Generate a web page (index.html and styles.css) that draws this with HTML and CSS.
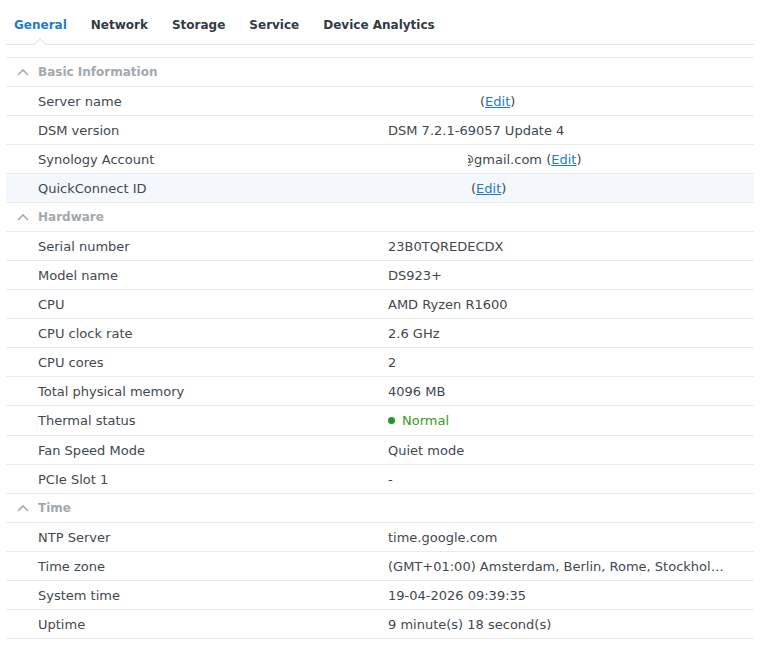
FILE: index.html
```html
<!DOCTYPE html>
<html>
<head>
<meta charset="utf-8">
<link rel="stylesheet" href="styles.css">
</head>
<body>
<div class="page">
  <nav class="tabs">
    <span class="tab active">General</span>
    <span class="tab">Network</span>
    <span class="tab">Storage</span>
    <span class="tab">Service</span>
    <span class="tab">Device Analytics</span>
  </nav>

  <div class="sections">
    <section class="group">
      <div class="group-head"><svg class="chev" width="12" height="8" viewBox="0 0 12 8"><path d="M1 7 L6 2 L11 7" fill="none" stroke="#a7adb2" stroke-width="1.6"/></svg>Basic Information</div>
      <div class="row"><div class="label">Server name</div><div class="value"><span class="pad-server"></span>(<a class="edit">Edit</a>)</div></div>
      <div class="row"><div class="label">DSM version</div><div class="value">DSM 7.2.1-69057 Update 4</div></div>
      <div class="row"><div class="label">Synology Account</div><div class="value"><span class="pad-account"></span><span class="clip">@</span>gmail.com (<a class="edit">Edit</a>)</div></div>
      <div class="row hover"><div class="label">QuickConnect ID</div><div class="value"><span class="pad-qc"></span>(<a class="edit">Edit</a>)</div></div>
    </section>

    <section class="group">
      <div class="group-head"><svg class="chev" width="12" height="8" viewBox="0 0 12 8"><path d="M1 7 L6 2 L11 7" fill="none" stroke="#a7adb2" stroke-width="1.6"/></svg>Hardware</div>
      <div class="row"><div class="label">Serial number</div><div class="value">23B0TQREDECDX</div></div>
      <div class="row"><div class="label">Model name</div><div class="value">DS923+</div></div>
      <div class="row"><div class="label">CPU</div><div class="value">AMD Ryzen R1600</div></div>
      <div class="row"><div class="label">CPU clock rate</div><div class="value">2.6 GHz</div></div>
      <div class="row"><div class="label">CPU cores</div><div class="value">2</div></div>
      <div class="row"><div class="label">Total physical memory</div><div class="value">4096 MB</div></div>
      <div class="row tall"><div class="label">Thermal status</div><div class="value status"><span class="dot"></span>Normal</div></div>
      <div class="row"><div class="label">Fan Speed Mode</div><div class="value">Quiet mode</div></div>
      <div class="row"><div class="label">PCIe Slot 1</div><div class="value">-</div></div>
    </section>

    <section class="group">
      <div class="group-head"><svg class="chev" width="12" height="8" viewBox="0 0 12 8"><path d="M1 7 L6 2 L11 7" fill="none" stroke="#a7adb2" stroke-width="1.6"/></svg>Time</div>
      <div class="row"><div class="label">NTP Server</div><div class="value">time.google.com</div></div>
      <div class="row"><div class="label">Time zone</div><div class="value">(GMT+01:00) Amsterdam, Berlin, Rome, Stockholm, Vienna</div></div>
      <div class="row"><div class="label">System time</div><div class="value">19-04-2026 09:39:35</div></div>
      <div class="row"><div class="label">Uptime</div><div class="value">9 minute(s) 18 second(s)</div></div>
    </section>
  </div>
</div>
</body>
</html>
```

FILE: styles.css
```css
* { box-sizing: border-box; }
html, body { margin: 0; padding: 0; background: #fff; }
body {
  font-family: "DejaVu Sans", Verdana, sans-serif;
  font-size: 13px;
  color: #3f4850;
}
.page {
  padding: 0 8px 0 6px;
}
.tabs {
  position: relative;
  display: flex;
  gap: 24px;
  height: 45px;
  padding: 18px 0 0 8px;
  border-bottom: 1px solid #e3e6e9;
}
.tab {
  font-weight: bold;
  font-size: 12px;
  color: #323b45;
  line-height: 15px;
  position: relative;
}
.tab.active {
  color: #1d7dc9;
}
.tab.active::after {
  content: "";
  position: absolute;
  left: 50%;
  top: 22px;
  width: 9px;
  height: 9px;
  margin-left: -5px;
  background: #fff;
  border-top: 1px solid #e3e6e9;
  border-left: 1px solid #e3e6e9;
  transform: rotate(45deg);
}
.sections {
  margin-top: 12px;
  border-top: 1px solid #e8ebed;
}
.group-head {
  display: flex;
  align-items: center;
  height: 29px;
  padding-left: 11px;
  padding-bottom: 1px;
  border-bottom: 1px solid #e8ebed;
  font-weight: bold;
  font-size: 12px;
  color: #a3a8ad;
}
.chev {
  margin-right: 9px;
  margin-top: 0;
}
.row {
  display: grid;
  grid-template-columns: 382px 1fr;
  height: 29px;
  align-items: center;
  border-bottom: 1px solid #e8ebed;
}
.row.tall {
  height: 30px;
}
.row.hover {
  background: #f4f8fc;
}
.label {
  padding-left: 32px;
  white-space: nowrap;
}
.value {
  white-space: nowrap;
  overflow: hidden;
  text-overflow: ellipsis;
  padding-right: 21px;
}
.edit {
  color: #1a7ccb;
  text-decoration: underline;
  cursor: pointer;
}
.pad-server { display: inline-block; width: 92px; }
.pad-account { display: inline-block; width: 80px; }
.pad-qc { display: inline-block; width: 83px; }
.clip {
  display: inline-block;
  width: 6px;
  overflow: hidden;
  direction: rtl;
  vertical-align: bottom;
}
.status {
  color: #3a9a22;
  display: flex;
  align-items: center;
}
.dot {
  width: 7px;
  height: 7px;
  border-radius: 50%;
  background: #1f9a1f;
  margin-right: 7px;
}
```
